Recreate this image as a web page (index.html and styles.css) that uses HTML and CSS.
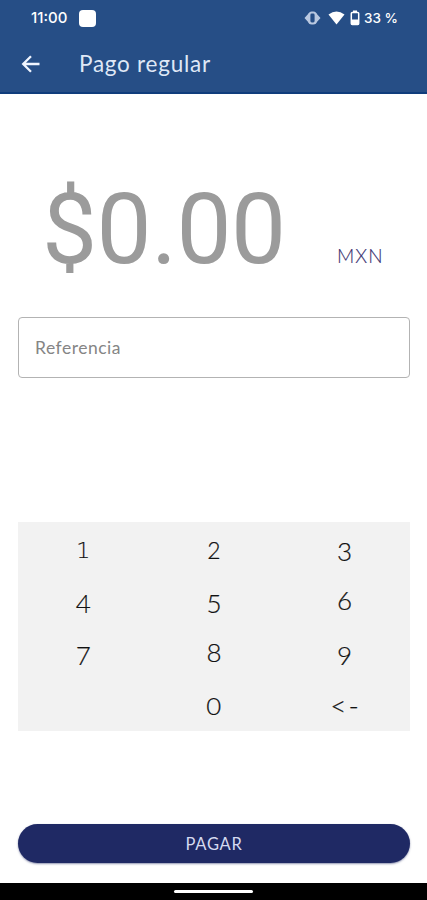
FILE: index.html
```html
<!DOCTYPE html>
<html lang="es">
<head>
<meta charset="utf-8">
<title>Pago regular</title>
<link rel="stylesheet" href="styles.css">
</head>
<body>
<div class="screen">
  <header class="top">
    <div class="status">
      <span class="clock">11:00</span>
      <span class="app-dot"></span>
      <svg class="vibrate" width="17" height="14" viewBox="0 0 17 14"><path d="M5 2 0.500 7 5 12zM12 2l4.500 5-4.500 5z" fill="#b9c8e0"/><rect x="5.300" y="1.500" width="6.400" height="11" rx="2.500" fill="none" stroke="#b9c8e0" stroke-width="2.200"/></svg>
      <svg class="wifi" width="17" height="14" viewBox="0 0 17 14"><path d="M0.500 3.600Q8.500-2.400 16.500 3.600L8.500 13.600z" fill="#fff"/></svg>
      <svg class="battery" width="10" height="16" viewBox="0 0 10 16"><path d="M3 0.500h4v2H3z" fill="#fff"/><rect x="1.300" y="2.600" width="7.400" height="12" rx="1" fill="none" stroke="#fff" stroke-width="1.500"/><path d="M1 9.500h8v5H1z" fill="#fff"/></svg>
      <span class="percent">33 %</span>
    </div>
    <div class="bar">
      <svg class="back" width="20" height="18" viewBox="0 0 20 18"><path d="M18.500 9H2.500M10 1.200 2.200 9l7.800 7.800" fill="none" stroke="#f0f5ff" stroke-width="2.300"/></svg>
      <h1 class="title">Pago regular</h1>
    </div>
  </header>
  <main class="content">
    <div class="amount-row">
      <span class="amount">$0.00</span>
      <span class="currency">MXN</span>
    </div>
    <div class="field"><span class="label">Referencia</span></div>
    <div class="keypad">
      <div class="key small"><span class="one">1</span></div><div class="key small"><span>2</span></div><div class="key low"><span>3</span></div>
      <div class="key low"><span>4</span></div><div class="key low"><span>5</span></div><div class="key"><span>6</span></div>
      <div class="key low"><span>7</span></div><div class="key"><span>8</span></div><div class="key low"><span>9</span></div>
      <div class="key"></div><div class="key small zero"><span>0</span></div><div class="key erase"><span>&lt;-</span></div>
    </div>
    <div class="pay"><span class="pay-text">PAGAR</span></div>
  </main>
  <footer class="nav"><span class="handle"></span></footer>
</div>
</body>
</html>
```
FILE: styles.css
```css
* { box-sizing: border-box; }
body { margin: 0; background: #fff; font-family: Lato, sans-serif; }
.screen { width: 427px; height: 900px; display: flex; flex-direction: column; overflow: hidden; }
.top { height: 94px; background: #264e86; border-bottom: 2px solid #103d7c; color: #fff; flex: none; }
.status { height: 36px; display: flex; align-items: center; padding-left: 31px; }
.clock { width: 48px; font: 500 15px/18px Inter, sans-serif; letter-spacing: 0; }
.app-dot { width: 17px; height: 17px; border-radius: 4px; background: #fff; }
.vibrate { margin-left: 208px; }
.wifi { margin-left: 7px; }
.battery { margin-left: 5px; }
.percent { margin-left: 4px; font: 500 13.5px/18px Inter, sans-serif; white-space: nowrap; }
.bar { height: 56px; display: flex; align-items: center; padding-left: 21px; }
.title { margin: -1px 0 0 38px; font-size: 22.5px; line-height: 28px; font-weight: 400; color: #dfe8f6; letter-spacing: 0.75px; }
.content { flex: 1; padding: 0 17px 0 18px; display: flex; flex-direction: column; }
.amount-row { height: 223px; display: flex; align-items: baseline; padding: 78px 0 0 24px; }
.amount { width: 295px; font: 400 98px/116px Roboto, sans-serif; letter-spacing: -0.5px; color: #9b9b9b; }
.currency { font-size: 19px; color: #39316f; font-weight: 300; letter-spacing: 1.1px; -webkit-text-stroke: 0.15px #39316f; }
.field { height: 61px; border: 1.500px solid #b3b3b3; border-radius: 4px; display: flex; align-items: center; padding-left: 16px; }
.label { font-size: 17.5px; color: #858585; letter-spacing: 0.5px; }
.keypad { margin-top: 144px; height: 209px; background: #f2f2f2; display: grid; grid-template-columns: repeat(3, 1fr); grid-template-rows: repeat(4, 52px); }
.key { display: flex; justify-content: center; font: 300 26px/52px Lato, sans-serif; color: #111; -webkit-text-stroke: 0.2px #111; }
.small { font-size: 23px; padding-top: 2px; }
.low { padding-top: 3px; }
.one { font-family: "DejaVu Sans", sans-serif; font-weight: 200; font-size: 22px; padding-top: 1px; }
.zero span { transform: scaleX(1.12); }
.erase { font-size: 28px; letter-spacing: 2px; padding: 1px 0 0 2px; }
.pay { margin-top: 93px; height: 39px; border-radius: 20px; background: #1f2964; box-shadow: 0 1px 2px #1f296480; display: flex; align-items: center; justify-content: center; }
.pay-text { font-size: 16.5px; color: #d5daf0; letter-spacing: 0.7px; }
.nav { height: 17px; background: #000; display: flex; justify-content: center; align-items: center; flex: none; }
.handle { width: 79px; height: 3px; border-radius: 2px; background: #fff; }
```
